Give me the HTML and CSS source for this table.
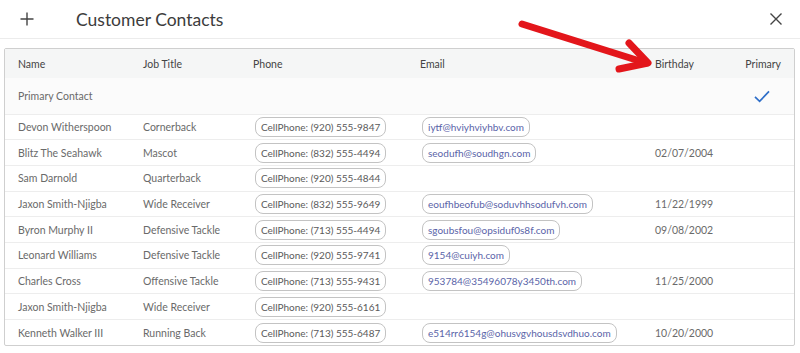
FILE: index.html
```html
<!DOCTYPE html>
<html lang="en">

<head>
    <meta charset="UTF-8">
    <meta name="viewport" content="width=device-width, initial-scale=1.0">
    <title>Customer Contacts</title>
    <link rel="stylesheet" href="styles.css">
</head>

<body>
    <div class="dialog">
        <header class="dialog-header">
            <button class="icon-btn add-btn" aria-label="Add contact">
                <svg width="16" height="16" viewBox="0 0 16 16"><path d="M8 1.5v13M1.5 8h13" stroke="#444" stroke-width="1.4" fill="none"/></svg>
            </button>
            <h1>Customer Contacts</h1>
            <button class="icon-btn close-btn" aria-label="Close">
                <svg width="14" height="14" viewBox="0 0 14 14"><path d="M1.5 1.5l11 11M12.5 1.5l-11 11" stroke="#444" stroke-width="1.4" fill="none"/></svg>
            </button>
        </header>

        <div class="table-card">
            <table class="contacts">
                <colgroup>
                    <col class="c-name">
                    <col class="c-job">
                    <col class="c-phone">
                    <col class="c-email">
                    <col class="c-birthday">
                    <col class="c-primary">
                </colgroup>
                <thead>
                    <tr>
                        <th>Name</th>
                        <th>Job Title</th>
                        <th>Phone</th>
                        <th>Email</th>
                        <th>Birthday</th>
                        <th class="primary-col">Primary</th>
                    </tr>
                </thead>
                <tbody>
                    <tr class="primary-row">
                        <td>Primary Contact</td>
                        <td></td>
                        <td></td>
                        <td></td>
                        <td></td>
                        <td class="primary-col">
                            <svg class="check" width="16" height="13" viewBox="0 0 16 13"><path d="M1 6.8l4.6 4.6L15 1.4" stroke="#2f6fc9" stroke-width="1.7" fill="none"/></svg>
                        </td>
                    </tr>
                    <tr>
                        <td>Devon Witherspoon</td>
                        <td>Cornerback</td>
                        <td><span class="chip">CellPhone: (920) 555-9847</span></td>
                        <td><span class="chip email">iytf@hviyhviyhbv.com</span></td>
                        <td></td>
                        <td></td>
                    </tr>
                    <tr>
                        <td>Blitz The Seahawk</td>
                        <td>Mascot</td>
                        <td><span class="chip">CellPhone: (832) 555-4494</span></td>
                        <td><span class="chip email">seodufh@soudhgn.com</span></td>
                        <td>02/07/2004</td>
                        <td></td>
                    </tr>
                    <tr>
                        <td>Sam Darnold</td>
                        <td>Quarterback</td>
                        <td><span class="chip">CellPhone: (920) 555-4844</span></td>
                        <td></td>
                        <td></td>
                        <td></td>
                    </tr>
                    <tr>
                        <td>Jaxon Smith-Njigba</td>
                        <td>Wide Receiver</td>
                        <td><span class="chip">CellPhone: (832) 555-9649</span></td>
                        <td><span class="chip email">eoufhbeofub@soduvhhsodufvh.com</span></td>
                        <td>11/22/1999</td>
                        <td></td>
                    </tr>
                    <tr>
                        <td>Byron Murphy II</td>
                        <td>Defensive Tackle</td>
                        <td><span class="chip">CellPhone: (713) 555-4494</span></td>
                        <td><span class="chip email">sgoubsfou@opsiduf0s8f.com</span></td>
                        <td>09/08/2002</td>
                        <td></td>
                    </tr>
                    <tr>
                        <td>Leonard Williams</td>
                        <td>Defensive Tackle</td>
                        <td><span class="chip">CellPhone: (920) 555-9741</span></td>
                        <td><span class="chip email">9154@cuiyh.com</span></td>
                        <td></td>
                        <td></td>
                    </tr>
                    <tr>
                        <td>Charles Cross</td>
                        <td>Offensive Tackle</td>
                        <td><span class="chip">CellPhone: (713) 555-9431</span></td>
                        <td><span class="chip email">953784@35496078y3450th.com</span></td>
                        <td>11/25/2000</td>
                        <td></td>
                    </tr>
                    <tr>
                        <td>Jaxon Smith-Njigba</td>
                        <td>Wide Receiver</td>
                        <td><span class="chip">CellPhone: (920) 555-6161</span></td>
                        <td></td>
                        <td></td>
                        <td></td>
                    </tr>
                    <tr>
                        <td>Kenneth Walker III</td>
                        <td>Running Back</td>
                        <td><span class="chip">CellPhone: (713) 555-6487</span></td>
                        <td><span class="chip email">e514rr6154g@ohusvgvhousdsvdhuo.com</span></td>
                        <td>10/20/2000</td>
                        <td></td>
                    </tr>
                </tbody>
            </table>
        </div>

        <!-- annotation arrow pointing at the Birthday column -->
        <svg class="annotation" width="140" height="60" viewBox="0 0 140 60">
            <path d="M4 5L128 44" stroke="#e3161b" stroke-width="7" stroke-linecap="round" fill="none"/>
            <path d="M111 24L130 44L101 50" stroke="#e3161b" stroke-width="7" stroke-linecap="round" stroke-linejoin="round" fill="none"/>
        </svg>
    </div>
</body>

</html>
```

FILE: styles.css
```css
* {
    margin: 0;
    padding: 0;
    box-sizing: border-box;
}

body {
    font-family: Lato, "Liberation Sans", sans-serif;
    background: #fff;
    color: #555;
}

.dialog {
    position: relative;
    width: 800px;
    height: 353px;
    overflow: hidden;
}

.dialog-header {
    display: flex;
    align-items: center;
    height: 39px;
    padding: 0 16px 0 18px;
    border-bottom: 1px solid #ececec;
}

.icon-btn {
    display: flex;
    align-items: center;
    justify-content: center;
    border: none;
    background: none;
    cursor: pointer;
}

.add-btn {
    width: 18px;
    height: 18px;
}

.dialog-header h1 {
    flex: 1;
    margin-left: 40px;
    font-size: 17.5px;
    font-weight: 400;
    color: #3c3c3c;
}

.close-btn {
    width: 16px;
    height: 16px;
}

.table-card {
    margin: 9px 5px 0 4px;
    border: 1px solid #cfcfcf;
    border-radius: 2px;
}

.contacts {
    width: 100%;
    border-collapse: collapse;
    table-layout: fixed;
    font-size: 10.5px;
}

.c-name { width: 125px; }
.c-job { width: 110px; }
.c-phone { width: 167px; }
.c-email { width: 235px; }
.c-birthday { width: 89px; }
.c-primary { width: auto; }

.contacts th {
    height: 29px;
    padding: 0 0 0 13px;
    text-align: left;
    font-weight: 400;
    color: #444;
    background: #f5f6f6;
}

.contacts td {
    height: 25.7px;
    padding: 0 0 0 13px;
    color: #6a6a6a;
    border-top: 1px solid #ededed;
    white-space: nowrap;
}

.contacts .primary-col {
    text-align: right;
    padding-right: 13px;
}

.contacts .primary-row td {
    height: 36px;
    border-top: none;
    background: #fbfbfb;
}

.primary-row .primary-col {
    padding-right: 24px;
}

.check {
    display: inline-block;
    vertical-align: middle;
}

.chip {
    display: inline-flex;
    align-items: center;
    height: 20px;
    margin-left: 2px;
    padding: 0 5px;
    border: 1px solid #c3c3c3;
    border-radius: 8px;
    color: #5a5a5a;
    font-size: 10px;
}

.chip.email {
    color: #5a64a8;
}

.annotation {
    position: absolute;
    left: 518px;
    top: 19px;
}
```
